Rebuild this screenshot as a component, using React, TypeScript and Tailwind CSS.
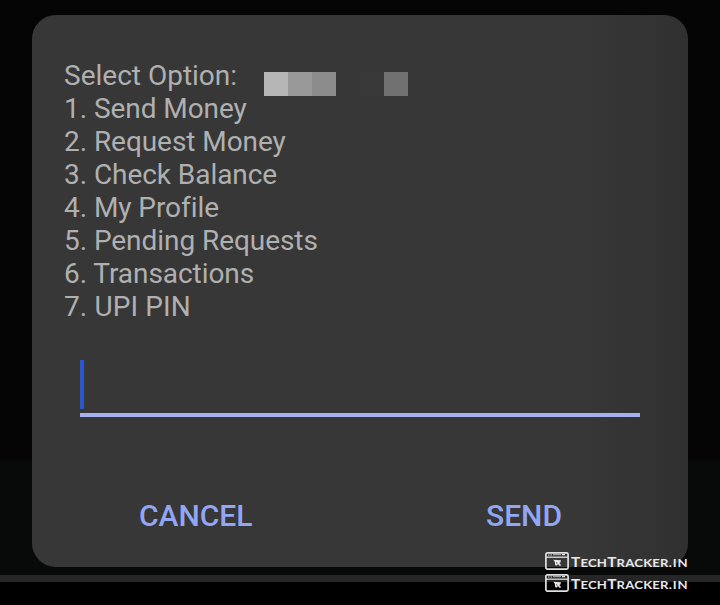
const options = [
  "Send Money",
  "Request Money",
  "Check Balance",
  "My Profile",
  "Pending Requests",
  "Transactions",
  "UPI PIN",
];

function Watermark() {
  return (
    <div className="flex h-[22px] items-start">
      <svg width="24" height="18" viewBox="0 0 24 18" className="mt-px shrink-0" fill="none">
        <rect x="0.9" y="0.9" width="22.2" height="16.2" rx="1.5" stroke="#e0e0e0" strokeWidth="1.7" />
        <path d="M1 5.2H23" stroke="#e0e0e0" strokeWidth="1.3" />
        <path d="M3 3H4.5M5.5 3H7M17 2.7H20" stroke="#e0e0e0" strokeWidth="1.2" />
        <path d="M8 2.7H16" stroke="#bdbdbd" strokeWidth="1" />
        <path
          d="M8.3 7.8L16 8.3L15.4 10.4L14.3 11L16.2 13.2L14.8 14L12.9 11.9L12 13.6L10.2 13.2L9.8 9.8Z"
          fill="#e6e6e6"
        />
        <path d="M11.5 10L12 12" stroke="#3a3a3a" strokeWidth="0.6" />
      </svg>
      <span className="ml-[2px] origin-left scale-x-[1.14] whitespace-nowrap font-['Lato',sans-serif] text-[11.5px] font-bold leading-[22px] tracking-[0.18px] text-[#e8e8e8]">
        <span className="text-[13.5px]">T</span>ECH<span className="text-[13.5px]">T</span>RACKER
        <span className="tracking-[0.8px]">.IN</span>
      </span>
    </div>
  );
}

export default function App() {
  return (
    <div className="relative h-[605px] w-[720px] overflow-hidden bg-black font-['Roboto',sans-serif]">
      <div className="flex h-[575px] flex-col bg-linear-to-b from-[#050505] from-[460px] to-[#080a09] to-[460px] px-8 pt-[15px]">
        <div className="h-[552px] rounded-[24px] bg-linear-to-r from-[#373737] from-[84%] to-[#303030] px-8 pt-[44px]">
          <div className="text-[28px] leading-[33px] text-[#b0b0b0]">
            <div className="flex">
              <span className="w-[200px]">Select Option:</span>
              <div className="mt-[13px] flex h-6">
                <i className="h-6 w-6 bg-[#b6b6b6]" />
                <i className="h-6 w-6 bg-[#999999]" />
                <i className="h-6 w-6 bg-[#8c8c8c]" />
                <i className="ml-6 h-6 w-6 bg-[#393939]" />
                <i className="h-6 w-6 bg-[#717171]" />
              </div>
            </div>
            <ol className="-mt-1 tracking-[-0.06px]">
              {options.map((label, i) => (
                <li key={label} className="last:tracking-[0.1px]">
                  {i + 1}. {label}
                </li>
              ))}
            </ol>
          </div>
          <div className="mx-4 mt-[37px] h-[57px] border-b-4 border-[#a3b2ee]">
            <div className="h-[49px] w-1 bg-[#2c56cb]" />
          </div>
          <div className="mt-[82px] flex text-[30px] font-medium leading-[33px] text-[#92a6f3]">
            <span className="ml-[75px] w-[347px]">CANCEL</span>
            <span>SEND</span>
          </div>
        </div>
      </div>
      <div className="h-[7px] bg-[#262626]" />
      <div className="absolute left-[545px] top-[551px]">
        <Watermark />
        <Watermark />
      </div>
    </div>
  );
}
